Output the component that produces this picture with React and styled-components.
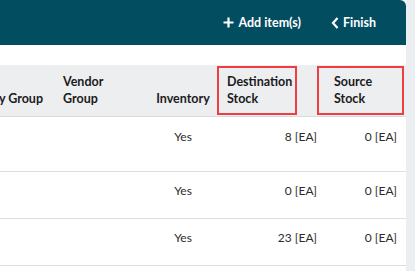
import React from 'react';
import styled, { createGlobalStyle } from 'styled-components';

const GlobalStyle = createGlobalStyle`
  html, body {
    margin: 0;
    padding: 0;
    background: #eceff1;
    font-family: 'Lato', 'Open Sans', sans-serif;
  }
`

const Page = styled.div`
  width: 406px;
  height: 271px;
  overflow: hidden;
  background: #ffffff;
`

const TopBar = styled.div`
  display: flex;
  justify-content: flex-end;
  align-items: center;
  gap: 30px;
  height: 45px;
  padding-right: 30px;
  box-sizing: border-box;

  background-color: #034d61;
  border-top-right-radius: 6px;
`

const BarButton = styled.button`
  display: flex;
  align-items: center;
  gap: ${props => props.gap}px;
  padding: 0;
  border: none;
  background: none;

  font-family: 'Lato', sans-serif;
  font-weight: 700;
  font-size: 12.5px;
  color: #ffffff;
  cursor: pointer;
`

const Spacer = styled.div`
  height: 20px;
`

const Table = styled.div`
  display: grid;
  grid-template-columns: 53px 93px 74px 107px 79px;
`

const HeadCell = styled.div`
  position: relative;
  display: flex;
  align-items: flex-end;
  justify-content: ${props => props.justify || 'flex-start'};
  height: 52px;
  padding: 0 ${props => props.pr ?? 10}px 9px ${props => props.pl ?? 10}px;
  box-sizing: border-box;
  overflow: ${props => props.clip ? 'hidden' : 'visible'};

  background-color: #eceef0;
  border-bottom: 1px solid #d9dcdf;

  font-weight: 700;
  font-size: 12.5px;
  line-height: 17px;
  color: #1b1b1b;
  white-space: nowrap;
`

const HeadText = styled.span`
  text-align: left;
`

const Highlight = styled.div`
  position: absolute;
  top: 1px;
  left: ${props => props.left}px;
  width: ${props => props.width}px;
  height: 49px;
  box-sizing: border-box;
  border: 2px solid #ef3e42;
  pointer-events: none;
`

const Cell = styled.div`
  display: flex;
  justify-content: ${props => props.justify || 'flex-start'};
  height: ${props => props.tall ? 55 : 47}px;
  padding: ${props => props.tall ? 11 : 10}px ${props => props.pr ?? 10}px 0 10px;
  box-sizing: border-box;

  border-bottom: 1px solid #dedede;

  font-size: 12px;
  line-height: 17px;
  color: #2b2b2b;
  white-space: nowrap;
`

const PlusIcon = () => (
  <svg width="11" height="11" viewBox="0 0 11 11">
    <path d="M5.5 0.5v10M0.5 5.5h10" stroke="#ffffff" strokeWidth="2.2" fill="none" />
  </svg>
)

const ChevronIcon = () => (
  <svg width="8" height="12" viewBox="0 0 8 12">
    <path d="M6.5 1L2 6l4.5 5" stroke="#ffffff" strokeWidth="2.2" fill="none" />
  </svg>
)

const rows = [
  { inventory: 'Yes', destination: '8 [EA]', source: '0 [EA]' },
  { inventory: 'Yes', destination: '0 [EA]', source: '0 [EA]' },
  { inventory: 'Yes', destination: '23 [EA]', source: '0 [EA]' },
]

const App = () => {
  return (
    <Page>
      <GlobalStyle />
      <TopBar>
        <BarButton gap={4}>
          <PlusIcon />
          Add item(s)
        </BarButton>
        <BarButton gap={4}>
          <ChevronIcon />
          Finish
        </BarButton>
      </TopBar>
      <Spacer />
      <Table>
        <HeadCell justify="flex-end" clip>Category Group</HeadCell>
        <HeadCell><HeadText>Vendor<br />Group</HeadText></HeadCell>
        <HeadCell justify="center">Inventory</HeadCell>
        <HeadCell pl={7}>
          <HeadText>Destination<br />Stock</HeadText>
          <Highlight left={-3} width={80} />
        </HeadCell>
        <HeadCell pl={7}>
          <HeadText>Source<br />Stock</HeadText>
          <Highlight left={-10} width={87} />
        </HeadCell>
        {rows.map((row, i) => (
          <React.Fragment key={i}>
            <Cell tall={i === 0} />
            <Cell tall={i === 0} />
            <Cell tall={i === 0} justify="center">{row.inventory}</Cell>
            <Cell tall={i === 0} justify="flex-end">{row.destination}</Cell>
            <Cell tall={i === 0} justify="flex-end" pr={9}>{row.source}</Cell>
          </React.Fragment>
        ))}
      </Table>
    </Page>
  );
};

export default App;
